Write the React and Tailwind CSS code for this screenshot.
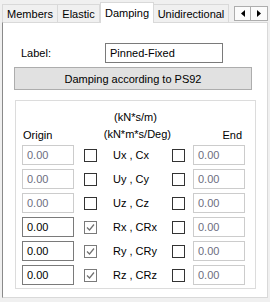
import React from "react";

const font = "font-['Liberation_Sans',Arial,sans-serif]";

function Check({ checked }) {
  return (
    <div
      className={`w-[13px] h-[13px] border bg-white flex items-center justify-center ${
        checked ? "border-[#7a7a7a]" : "border-[#333333]"
      }`}
    >
      {checked && (
        <svg width="9" height="9" viewBox="0 0 9 9">
          <path d="M1 4.5 L3.5 7 L8 1.5" fill="none" stroke="#6f6f6f" strokeWidth="1.2" />
        </svg>
      )}
    </div>
  );
}

function Field({ enabled, w = "w-[52px]" }) {
  return (
    <div
      className={`${w} h-[20px] bg-white border flex items-center pl-[4px] ${
        enabled ? "border-[#7a7a7a] text-black" : "border-[#cccccc] text-[#6d6d80]"
      }`}
    >
      0.00
    </div>
  );
}

const rows = [
  { label: "Ux , Cx", en: false },
  { label: "Uy , Cy", en: false },
  { label: "Uz , Cz", en: false },
  { label: "Rx , CRx", en: true },
  { label: "Ry , CRy", en: true },
  { label: "Rz , CRz", en: true },
];

export default function App() {
  return (
    <div className={`w-[270px] h-[302px] bg-[#f0f0f0] overflow-hidden text-[11px] leading-[14px] text-black ${font}`}>
      {/* tab strip */}
      <div className="h-[22px] flex items-end pl-[2px] relative">
        <div className="h-[18px] w-[56px] border border-b-0 border-[#d9d9d9] bg-[#f0f0f0] flex items-center justify-center">Members</div>
        <div className="h-[18px] w-[42px] border border-b-0 border-l-0 border-[#d9d9d9] bg-[#f0f0f0] flex items-center justify-center">Elastic</div>
        <div className="h-[21px] w-[54px] border border-b-0 border-[#d9d9d9] bg-white flex items-start justify-center pt-[3px] -mb-px relative z-10">Damping</div>
        <div className="h-[18px] w-[75px] border border-b-0 border-l-0 border-[#d9d9d9] bg-[#f0f0f0] flex items-center justify-center">Unidirectional</div>
        <div className="ml-auto mr-[2px] mb-[1px] flex self-start mt-[6px]">
          <div className="w-[17px] h-[15px] border border-[#adadad] bg-[#fbfbfb] flex items-center justify-center">
            <svg width="4" height="7" viewBox="0 0 4 7"><path d="M4 0 L0 3.5 L4 7Z" fill="#000" /></svg>
          </div>
          <div className="w-[17px] h-[15px] border border-l-0 border-[#adadad] bg-[#fbfbfb] flex items-center justify-center">
            <svg width="4" height="7" viewBox="0 0 4 7"><path d="M0 0 L4 3.5 L0 7Z" fill="#000" /></svg>
          </div>
        </div>
      </div>

      {/* panel */}
      <div className="ml-[2px] w-[266px] h-[276px] bg-white border border-[#d9d9d9] border-l-[#8a8a8a] pt-[20px]">
        <div className="flex items-center h-[20px]">
          <div className="ml-[18px] w-[84px]">Label:</div>
          <div className="w-[118px] h-[20px] border border-[#7a7a7a] flex items-center pl-[4px]">Pinned-Fixed</div>
        </div>
        <div className="mt-[4px] ml-[11px] w-[238px] h-[23px] bg-[#e1e1e1] border border-[#adadad] flex items-center justify-center">
          Damping according to PS92
        </div>

        <div className="mt-[10px] ml-[12px] w-[241px] h-[189px] border border-[#dcdcdc] pt-[7px]">
          <div className="h-[17px] flex items-center justify-center">(kN*s/m)</div>
          <div className="h-[17px] flex items-center justify-between pl-[7px] pr-[13px]">
            <span className="pt-[2px]">Origin</span>
            <span>(kN*m*s/Deg)</span>
            <span className="pt-[2px]">End</span>
          </div>
          <div className="mt-[3px] flex flex-col gap-[4px]">
            {rows.map((r) => (
              <div key={r.label} className="flex items-center h-[20px] pl-[6px]">
                <Field enabled={r.en} />
                <div className="ml-[10px]"><Check checked={r.en} /></div>
                <div className="ml-[16px] w-[59px]">{r.label}</div>
                <Check checked={false} />
                <div className="ml-[8px]"><Field enabled={false} /></div>
              </div>
            ))}
          </div>
        </div>
      </div>
    </div>
  );
}
